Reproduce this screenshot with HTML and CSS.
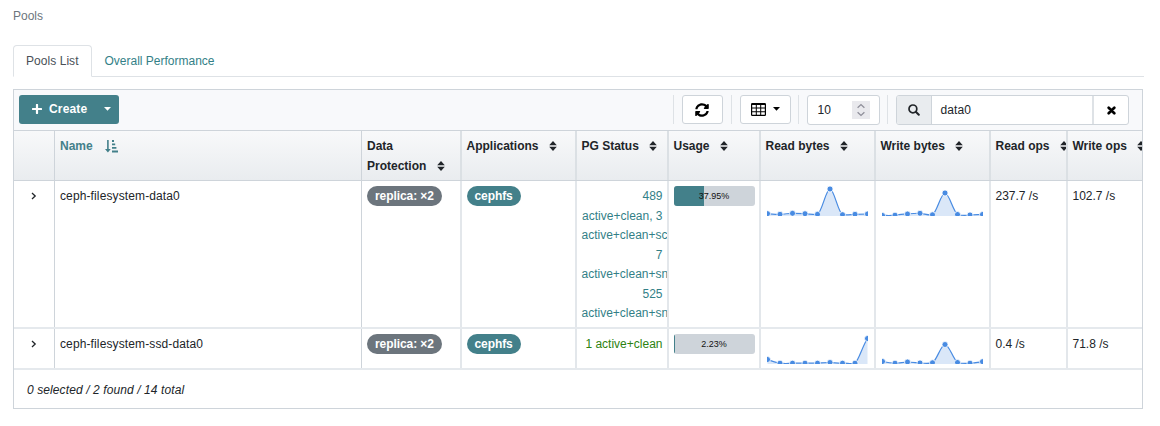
FILE: index.html
```html
<!DOCTYPE html>
<html lang="en">
<head>
<meta charset="utf-8">
<title>Pools</title>
<link rel="stylesheet" href="styles.css">
</head>
<body>
<svg class="defs" width="0" height="0">
  <symbol id="sort" viewBox="0 0 8 10"><path d="M4 0 7.8 4.2H.2zM.2 5.8H7.8L4 10z"/></symbol>
  <symbol id="chevron" viewBox="0 0 6 8"><path d="M1 1l3.2 3L1 7" fill="none" stroke="#212529" stroke-width="1.3"/></symbol>
</svg>
<div class="breadcrumb">Pools</div>
<nav class="tabs">
  <a class="tab active">Pools List</a>
  <a class="tab"><span class="perf">Overall Performance</span></a>
</nav>
<main class="datatable">
  <div class="toolbar">
    <button class="create">
      <svg width="10" height="10" viewBox="0 0 10 10"><path d="M5 .9V9.1M.9 5H9.1" stroke="#fff" stroke-width="2.2" stroke-linecap="round"/></svg>
      <span>Create</span>
      <svg class="caret" width="7" height="4" viewBox="0 0 7 4"><path d="M0 0H7L3.5 3.7z" fill="#fff"/></svg>
    </button>
    <div class="tools">
      <div class="group g-refresh"><button class="btn refresh">
        <svg width="14" height="14" viewBox="0 0 512 512"><path d="M371 134c-32-30-73-46-116-46-78 0-145 53-163 127-1 5-6 9-12 9H24c-8 0-14-7-12-14C33 95 135 8 256 8c66 0 127 26 171 69l36-36c15-15 41-4 41 17v134c0 13-11 24-24 24H346c-21 0-32-26-17-41zM32 296h134c21 0 32 26 17 41l-42 41c32 30 73 46 116 46 78 0 145-53 163-127 1-5 6-9 12-9h56c8 0 14 7 12 14-21 115-123 202-244 202-66 0-127-26-171-69l-36 36c-15 15-41 4-41-17V320c0-13 11-24 24-24z"/></svg>
      </button></div>
      <div class="group g-cols"><button class="btn columns">
        <svg width="15" height="13" viewBox="0 0 15 13"><path fill-rule="evenodd" d="M1.3 0H13.7Q15 0 15 1.3V11.7Q15 13 13.7 13H1.3Q0 13 0 11.7V1.3Q0 0 1.3 0zM1.2 2H4.8V4.6H1.2zM5.8 2H9.2V4.6H5.8zM10.2 2H13.8V4.6H10.2zM1.2 5.6H4.8V8.2H1.2zM5.8 5.6H9.2V8.2H5.8zM10.2 5.6H13.8V8.2H10.2zM1.2 9.2H4.8V11.8H1.2zM5.8 9.2H9.2V11.8H5.8zM10.2 9.2H13.8V11.8H10.2z"/></svg>
        <svg class="caret-dark" width="7" height="4" viewBox="0 0 7 4"><path d="M0 0H7L3.5 3.8z"/></svg>
      </button></div>
      <div class="group g-limit"><div class="limit"><span>10</span>
        <svg class="spin" width="18" height="18" viewBox="0 0 18 18"><path d="M5.6 6.7 9 3.6l3.4 3.1M5.6 11.3 9 14.4l3.4-3.1" fill="none" stroke="#8f8f9a" stroke-width="1.3"/></svg>
      </div></div>
      <div class="group g-search"><div class="search">
        <span class="addon"><svg width="12" height="12" viewBox="0 0 12 12"><circle cx="4.9" cy="4.9" r="3.9" fill="none" stroke="#212529" stroke-width="1.7"/><path d="M7.8 7.8 10.8 10.8" stroke="#212529" stroke-width="2" stroke-linecap="round"/></svg></span>
        <span class="query">data0</span>
        <span class="clear"><svg width="9" height="9" viewBox="0 0 9 9"><path d="M1.7 1.7 7.3 7.3M7.3 1.7 1.7 7.3" stroke="#000" stroke-width="2.7" stroke-linecap="round"/></svg></span>
      </div></div>
    </div>
  </div>

  <div class="row header">
    <div class="cell thin"></div>
    <div class="cell thin sorted">Name<svg class="amount" width="13" height="13" viewBox="0 0 13 13"><path d="M2.9 0V9.5" stroke="#43808a" stroke-width="1.6"/><path d="M0 9H5.8L2.9 12.5zM7 0H9V1.9H7zM7 3.5H10.2V5.3H7zM7 7H11.4V8.8H7zM7 10.6H13V12.4H7z" fill="#43808a"/></svg></div>
    <div class="cell">Data<br>Protection<svg class="sort"><use href="#sort"/></svg></div>
    <div class="cell">Applications<svg class="sort"><use href="#sort"/></svg></div>
    <div class="cell">PG Status<svg class="sort"><use href="#sort"/></svg></div>
    <div class="cell">Usage<svg class="sort"><use href="#sort"/></svg></div>
    <div class="cell">Read bytes<svg class="sort"><use href="#sort"/></svg></div>
    <div class="cell">Write bytes<svg class="sort"><use href="#sort"/></svg></div>
    <div class="cell">Read ops<svg class="sort"><use href="#sort"/></svg></div>
    <div class="cell last">Write ops<svg class="sort"><use href="#sort"/></svg></div>
  </div>

  <div class="row first">
    <div class="cell thin toggle"><svg width="6" height="8"><use href="#chevron"/></svg></div>
    <div class="cell thin name">ceph-filesystem-data0</div>
    <div class="cell"><span class="badge grey">replica: ×2</span></div>
    <div class="cell"><span class="badge teal">cephfs</span></div>
    <div class="cell status">489<br>active+clean, 3<br>active+clean+scrubbing<br>7<br>active+clean+snaptrim<br>525<br>active+clean+snaptrim_wait</div>
    <div class="cell"><div class="usage"><div class="bar" style="width:37.95%"></div><span>37.95%</span></div></div>
    <div class="cell"><svg class="spark" viewBox="0 0 101 32"><path class="area" d="M.5 29.7C5 30 9 30.3 13 30.3S22 29.3 25.5 29.3 34 29.5 38 29.7 48 31 50.5 30.3C55 28 59 5 63 5S71 28 75.5 30.7C79 31.3 84 30.5 88 30.3S97 30 100.5 30V32H.5z"/><path class="line" d="M.5 29.7C5 30 9 30.3 13 30.3S22 29.3 25.5 29.3 34 29.5 38 29.7 48 31 50.5 30.3C55 28 59 5 63 5S71 28 75.5 30.7C79 31.3 84 30.5 88 30.3S97 30 100.5 30"/><g><circle cx=".5" cy="29.7" r="3"/><circle cx="13" cy="30.3" r="3"/><circle cx="25.5" cy="29.3" r="3"/><circle cx="38" cy="29.7" r="3"/><circle cx="50.5" cy="30.3" r="3"/><circle cx="63" cy="5" r="3"/><circle cx="75.5" cy="30.7" r="3"/><circle cx="88" cy="30.3" r="3"/><circle cx="100.5" cy="30" r="3"/></g></svg></div>
    <div class="cell"><svg class="spark" viewBox="0 0 101 32"><path class="area" d="M.5 31.2C5 31.7 9 31.7 13 31.2S22 30.2 25.5 29.9 34 29 38 29.3 47 31.7 50.5 30.8C55 28 59 9 63 9S71 27 75.5 30.5C79 31.5 84 31.5 88 31S97 30.8 100.5 30.5V32H.5z"/><path class="line" d="M.5 31.2C5 31.7 9 31.7 13 31.2S22 30.2 25.5 29.9 34 29 38 29.3 47 31.7 50.5 30.8C55 28 59 9 63 9S71 27 75.5 30.5C79 31.5 84 31.5 88 31S97 30.8 100.5 30.5"/><g><circle cx=".5" cy="31.5" r="3"/><circle cx="13" cy="31.2" r="3"/><circle cx="25.5" cy="30" r="3"/><circle cx="38" cy="29.3" r="3"/><circle cx="50.5" cy="30.8" r="3"/><circle cx="63" cy="9" r="3"/><circle cx="75.5" cy="30.5" r="3"/><circle cx="88" cy="31" r="3"/><circle cx="100.5" cy="30.5" r="3"/></g></svg></div>
    <div class="cell">237.7 /s</div>
    <div class="cell last">102.7 /s</div>
  </div>

  <div class="row second">
    <div class="cell thin toggle"><svg width="6" height="8"><use href="#chevron"/></svg></div>
    <div class="cell thin name">ceph-filesystem-ssd-data0</div>
    <div class="cell"><span class="badge grey">replica: ×2</span></div>
    <div class="cell"><span class="badge teal">cephfs</span></div>
    <div class="cell status ok">1 active+clean</div>
    <div class="cell"><div class="usage"><div class="bar" style="width:2.23%"></div><span>2.23%</span></div></div>
    <div class="cell"><svg class="spark" viewBox="0 0 101 32"><path class="area" d="M.5 27.5C5 29 9 30.7 13 31.2S22 31.5 25.5 31.2 34 31.2 38 31.2 46 31.2 50.5 31 59 30.5 63 30.5 71 31.5 75.5 31.2 84 32.5 88 31.2C92 28 95 15 100.5 6.5V32H.5z"/><path class="line" d="M.5 27.5C5 29 9 30.7 13 31.2S22 31.5 25.5 31.2 34 31.2 38 31.2 46 31.2 50.5 31 59 30.5 63 30.5 71 31.5 75.5 31.2 84 32.5 88 31.2C92 28 95 15 100.5 6.5"/><g><circle cx=".5" cy="27.5" r="3"/><circle cx="13" cy="31.2" r="3"/><circle cx="25.5" cy="31.2" r="3"/><circle cx="38" cy="31.2" r="3"/><circle cx="50.5" cy="31.2" r="3"/><circle cx="63" cy="30.5" r="3"/><circle cx="75.5" cy="31.2" r="3"/><circle cx="88" cy="31.2" r="3"/><circle cx="100.5" cy="6.5" r="3"/></g></svg></div>
    <div class="cell"><svg class="spark" viewBox="0 0 101 32"><path class="area" d="M.5 29.5C5 30.5 9 31.2 13 31.2S22 30 25.5 30 34 30.7 38 31 47 31.7 50.5 30.8C55 28 59 12.5 63 12.5S71 27 75.5 30.5C79 31.5 84 31.5 88 31.2S97 30.5 100.5 29.7V32H.5z"/><path class="line" d="M.5 29.5C5 30.5 9 31.2 13 31.2S22 30 25.5 30 34 30.7 38 31 47 31.7 50.5 30.8C55 28 59 12.5 63 12.5S71 27 75.5 30.5C79 31.5 84 31.5 88 31.2S97 30.5 100.5 29.7"/><g><circle cx=".5" cy="29.5" r="3"/><circle cx="13" cy="31.2" r="3"/><circle cx="25.5" cy="30" r="3"/><circle cx="38" cy="31" r="3"/><circle cx="50.5" cy="30.8" r="3"/><circle cx="63" cy="12.5" r="3"/><circle cx="75.5" cy="30.5" r="3"/><circle cx="88" cy="31.2" r="3"/><circle cx="100.5" cy="29.7" r="3"/></g></svg></div>
    <div class="cell">0.4 /s</div>
    <div class="cell last">71.8 /s</div>
  </div>
  <div class="footer">0 selected / 2 found / 14 total</div>
</main>
</body>
</html>
```
FILE: styles.css
```css
* { box-sizing: border-box; }
body { margin: 0; padding: 7px 17px 0 13px; background: #fff; color: #212529; font: 12px/19.5px "Liberation Sans", Arial, sans-serif; }
.defs { display: block; height: 0; }
svg { flex: none; }
button { font: inherit; color: inherit; margin: 0; }
.breadcrumb { height: 38px; color: #6c757d; }
.tabs { display: flex; height: 32px; margin-right: -1px; border-bottom: 1px solid #dee2e6; }
.tab { height: 32px; padding: 6px 12px; border: 1px solid transparent; color: #337f87; white-space: nowrap; }
.tab.active { width: 78.5px; color: #495057; background: #fff; border-color: #dee2e6 #dee2e6 #fff; border-radius: 4px 4px 0 0; letter-spacing: .05px; }
.datatable { margin-top: 12px; height: 320px; border: 1px solid #ced4da; overflow: hidden; }
.toolbar { display: flex; justify-content: space-between; height: 40px; padding: 5px 13px 0 5px; background: #f8f9fb; }
.create { display: flex; align-items: center; width: 100px; height: 29px; padding: 0 8px 0 13px; border: 0; border-radius: 3px; background: #43808a; color: #fff; font-weight: bold; }
.create svg { margin-top: -1px; }
.create span { margin: 1px 0 0 7px; letter-spacing: .15px; }
.create .caret { margin: -2px 0 0 auto; }
.tools { display: flex; }
.group { height: 29px; padding-left: 8px; border-left: 1px solid #dee2e6; }
.g-refresh { width: 57.5px; padding-left: 7.5px; }
.g-cols { width: 67.5px; }
.g-limit { width: 89px; padding-left: 7.5px; }
.btn { display: flex; align-items: center; justify-content: center; height: 29px; padding: 0; border: 1px solid #ced4da; border-radius: 3px; background: #fff; }
.refresh { width: 41px; }
.columns { width: 51px; gap: 7px; }
.caret-dark { margin-top: -2px; }
.limit { display: flex; align-items: center; justify-content: space-between; width: 73px; height: 30px; padding: 0 9px 0 10px; border: 1px solid #ced4da; border-radius: 3px; background: #fff; }
.limit span { padding-top: 1px; }
.spin { background: #e9e9ed; }
.search { display: flex; width: 233px; height: 30px; border: 1px solid #ced4da; border-radius: 3px; background: #fff; overflow: hidden; }
.addon { display: flex; align-items: center; justify-content: center; width: 35px; background: #e9ecef; border-right: 1px solid #ced4da; }
.query { flex: 1; padding: 5px 8.5px; letter-spacing: .1px; }
.clear { display: flex; align-items: center; justify-content: center; width: 36px; border-left: 2px solid #dee2e6; }
.row { display: grid; grid-template-columns: 41px 307px 99.5px 115px 92px 92px 115px 115px 77px 74.5px; }
.header { height: 51px; border-top: 1px solid #ced4da; border-bottom: 1px solid #ced4da; background: linear-gradient(#f8f9fa, #e9ecef); font-weight: bold; }
.first { height: 148px; border-bottom: 2px solid #e5e9ed; }
.second { height: 41px; border-bottom: 2px solid #e5e9ed; }
.cell { min-width: 0; padding: 6px 6px 0 5px; border-right: 2px solid #e3e7eb; overflow: hidden; white-space: nowrap; }
.header .cell { border-color: #dbe0e4; }
.row .thin { border-right: 1px solid #ced4da; }
.row .last { border-right: 0; }
.sorted { color: #43808a; }
.sort { width: 8px; height: 10px; margin-left: 10.5px; vertical-align: -1px; fill: #212529; }
.amount { margin-left: 12px; vertical-align: -3px; }
.toggle { padding-left: 17px; }
.name { letter-spacing: .12px; }
.badge { display: block; width: max-content; height: 20px; margin-top: -1px; padding: 0 8px; border-radius: 10px; color: #fff; font-weight: bold; line-height: 21px; letter-spacing: -.08px; }
.grey { background: #6c757d; }
.teal { background: #43808a; }
.status { padding-right: 4px; color: #337f87; text-align: right; }
.ok { color: #2d8310; }
.usage { position: relative; width: 81px; height: 20px; margin-top: -1px; border-radius: 3px; background: #ced4da; overflow: hidden; }
.bar { height: 100%; background: #43808a; }
.usage span { position: absolute; inset: 0; text-align: center; font-size: 9px; line-height: 21px; color: #111; }
.spark { display: block; width: 101px; height: 32px; margin: -3px 0 0 1.5px; overflow: hidden; }
.area { fill: #dae7f8; }
.line { fill: none; stroke: #488be2; stroke-width: 1.2; }
.spark circle { fill: #488be2; stroke: #fff; stroke-width: .8; }
.footer { padding: 11px 13px; font-style: italic; letter-spacing: .1px; }
```
